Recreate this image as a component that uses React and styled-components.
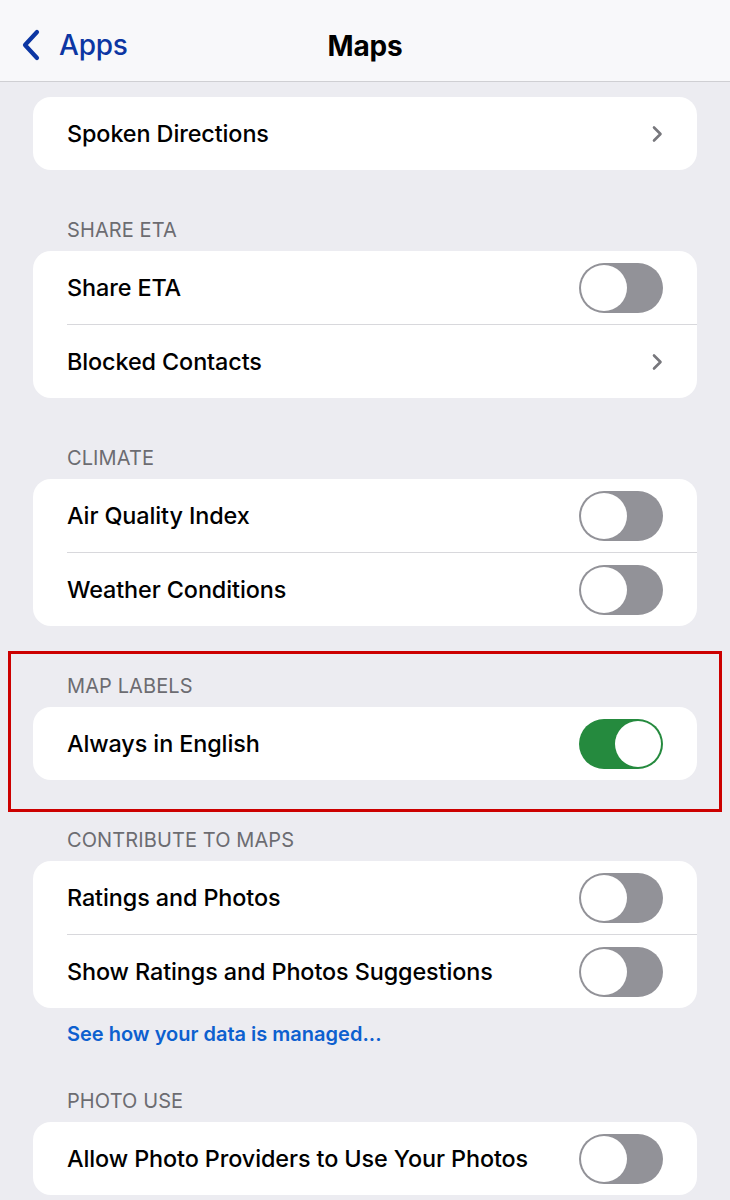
import styled, { createGlobalStyle } from "styled-components";

const GlobalStyle = createGlobalStyle`
  html, body {
    margin: 0;
    padding: 0;
    background: #ececf1;
  }
  body {
    font-family: Inter, "Noto Sans", "Liberation Sans", sans-serif;
    -webkit-font-smoothing: antialiased;
  }
`;

export default function App() {
  return (
    <>
      <GlobalStyle />
      <Screen>
        <NavBar>
          <BackButton>
            <svg width="22" height="34" viewBox="0 0 22 34">
              <path
                d="M17 4 L5 17 L17 30"
                fill="none"
                stroke="#0c36a3"
                strokeWidth="4.2"
                strokeLinecap="round"
                strokeLinejoin="round"
              />
            </svg>
            <span>Apps</span>
          </BackButton>
          <Title>Maps</Title>
        </NavBar>

        <Content>
          {sections.map((section, i) => (
            <Section key={i} $highlight={section.highlight}>
              {section.title && (
                <Header $top={section.tight ? 43 : 48}>{section.title}</Header>
              )}
              <Card>
                {section.rows.map((row) => (
                  <Row key={row.label}>
                    <Label>{row.label}</Label>
                    {row.type === "link" ? (
                      <Chevron />
                    ) : (
                      <Toggle $on={row.on}>
                        <Knob $on={row.on} />
                      </Toggle>
                    )}
                  </Row>
                ))}
              </Card>
              {section.footer && <FooterLink>{section.footer}</FooterLink>}
            </Section>
          ))}
        </Content>
      </Screen>
    </>
  );
}

function Chevron() {
  return (
    <ChevronIcon width="14" height="18" viewBox="0 0 14 18">
      <path
        d="M4 2.5 L10.5 9 L4 15.5"
        fill="none"
        stroke="#77777c"
        strokeWidth="2.6"
        strokeLinecap="round"
        strokeLinejoin="round"
      />
    </ChevronIcon>
  );
}

//#region Data
const sections = [
  {
    rows: [{ label: "Spoken Directions", type: "link" }],
  },
  {
    title: "Share ETA",
    rows: [
      { label: "Share ETA", type: "toggle", on: false },
      { label: "Blocked Contacts", type: "link" },
    ],
  },
  {
    title: "Climate",
    rows: [
      { label: "Air Quality Index", type: "toggle", on: false },
      { label: "Weather Conditions", type: "toggle", on: false },
    ],
  },
  {
    title: "Map Labels",
    highlight: true,
    rows: [{ label: "Always in English", type: "toggle", on: true }],
  },
  {
    title: "Contribute to Maps",
    footer: "See how your data is managed...",
    rows: [
      { label: "Ratings and Photos", type: "toggle", on: false },
      { label: "Show Ratings and Photos Suggestions", type: "toggle", on: false },
    ],
  },
  {
    title: "Photo Use",
    tight: true,
    rows: [
      { label: "Allow Photo Providers to Use Your Photos", type: "toggle", on: false },
    ],
  },
];
//#endregion

//#region STYLED COMPONENTS
const Screen = styled.div`
  width: 730px;
  height: 1200px;
  overflow: hidden;
  background: #ececf1;
`;

const NavBar = styled.div`
  position: relative;
  height: 82px;
  display: flex;
  align-items: center;
  justify-content: center;
  background: #f8f8fa;
  border-bottom: 1px solid #cfcfd3;
  box-sizing: border-box;
  padding-top: 10px;
`;

const BackButton = styled.div`
  position: absolute;
  left: 20px;
  top: 28px;
  display: flex;
  align-items: center;
  gap: 17px;
  color: #0c36a3;
  font-size: 28px;
  font-weight: 500;
  letter-spacing: -0.2px;
`;

const Title = styled.h1`
  margin: 0;
  font-size: 28px;
  font-weight: 700;
  color: #000;
  letter-spacing: -0.2px;
`;

const Content = styled.div`
  padding: 15px 33px 0;
`;

const Section = styled.div`
  position: relative;
  &::after {
    content: "";
    display: ${({ $highlight }) => ($highlight ? "block" : "none")};
    position: absolute;
    left: -25px;
    right: -25px;
    top: 25px;
    bottom: -32px;
    border: 3px solid #cc0000;
    pointer-events: none;
  }
`;

const Header = styled.div`
  padding: ${({ $top }) => $top}px 34px 9px;
  font-size: 20px;
  line-height: 24px;
  text-transform: uppercase;
  color: #6c6c71;
  letter-spacing: 0.1px;
`;

const Card = styled.div`
  background: #fff;
  border-radius: 18px;
  overflow: hidden;
`;

const Row = styled.div`
  height: 73px;
  margin-left: 34px;
  padding-right: 34px;
  display: flex;
  align-items: center;
  justify-content: space-between;
  & + & {
    border-top: 1px solid #d8d8dc;
  }
`;

const Label = styled.span`
  font-size: 23.4px;
  font-weight: 500;
  color: #000;
  letter-spacing: -0.1px;
`;

const ChevronIcon = styled.svg`
  margin-right: -1px;
`;

const Toggle = styled.div`
  width: 84px;
  height: 50px;
  border-radius: 25px;
  background: ${({ $on }) => ($on ? "#258a3e" : "#929298")};
  position: relative;
  flex-shrink: 0;
`;

const Knob = styled.div`
  position: absolute;
  top: 2px;
  left: ${({ $on }) => ($on ? "36px" : "2px")};
  width: 46px;
  height: 46px;
  border-radius: 50%;
  background: #fff;
`;

const FooterLink = styled.div`
  padding: 14px 34px 0;
  font-size: 20px;
  line-height: 24px;
  font-weight: 600;
  color: #0d60cf;
`;
//#endregion
